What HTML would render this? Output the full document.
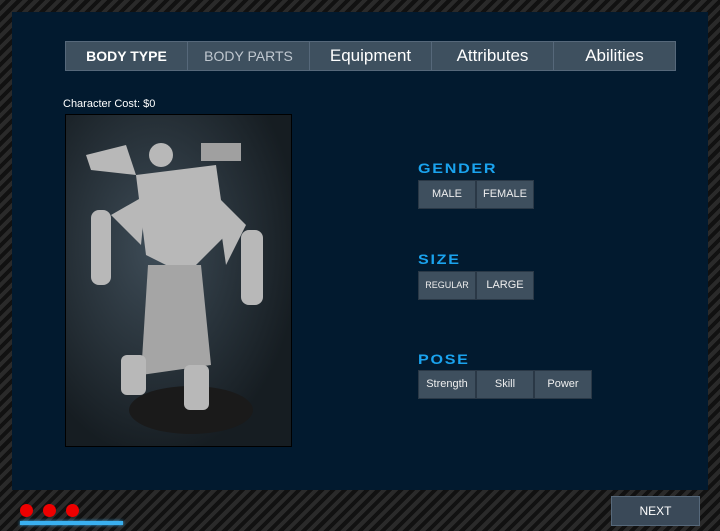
<!DOCTYPE html>
<html><head><style>
body{margin:0;width:720px;height:531px;overflow:hidden;font-family:"Liberation Sans",sans-serif;
background:repeating-linear-gradient(135deg,#2a2a2a 0 4px,#111 4px 8px);}
.main{position:absolute;left:12px;top:12px;width:696px;height:478px;background:#021a2f;}
.tabs{position:absolute;left:65px;top:41px;width:611px;height:30px;display:flex;background:#3e505f;border:1px solid #56687a;box-sizing:border-box}
.tabs div{flex:1;color:#fff;text-align:center;line-height:28px;font-size:17px;border-left:1px solid #56687a}
.tabs div:first-child{border:none;font-weight:bold;font-size:14px}
.tabs div.g{color:#c0c8d0;font-size:14px}
.lbl{position:absolute;color:#1aa3ee;font-weight:bold;font-size:14px;letter-spacing:1.5px;transform:scaleX(1.15);transform-origin:left}
.btns{position:absolute;display:flex;height:29px}
.btns div{width:58px;background:#3e4f5e;border:1px solid #2a3846;color:#eee;font-size:11px;text-align:center;line-height:27px;box-sizing:border-box}
</style></head><body>
<div class="main"></div>
<div class="tabs"><div>BODY TYPE</div><div class="g">BODY PARTS</div><div>Equipment</div><div>Attributes</div><div>Abilities</div></div>
<div style="position:absolute;left:63px;top:98px;color:#fff;font-size:11px">Character Cost: $0</div>
<div style="position:absolute;left:65px;top:114px;width:227px;height:333px;background:radial-gradient(ellipse at 40% 40%,#3e4c57,#161d22 75%);border:1px solid #000;box-sizing:border-box">
<svg width="227" height="333" viewBox="0 0 227 333">
<ellipse cx="125" cy="295" rx="62" ry="24" fill="#1a1a1a"/>
<g fill="#b8b8b8">
<circle cx="95" cy="40" r="12"/>
<path d="M20 40 L60 30 L70 60 L25 55 Z"/>
<rect x="135" y="28" width="40" height="18" fill="#a0a0a0"/>
<path d="M70 60 L150 50 L160 120 L120 160 L80 140 Z"/>
<rect x="25" y="95" width="20" height="75" rx="8"/>
<rect x="175" y="115" width="22" height="75" rx="8"/>
<path d="M45 100 L80 80 L75 130 Z"/><path d="M150 80 L180 110 L160 150 Z"/>
<path d="M82 150 L135 150 L145 250 L75 260 Z" fill="#a5a5a5"/>
<rect x="55" y="240" width="25" height="40" rx="6"/>
<rect x="118" y="250" width="25" height="45" rx="6"/>
</g></svg></div>
<div class="lbl" style="left:418px;top:160px">GENDER</div>
<div class="btns" style="left:418px;top:180px"><div>MALE</div><div>FEMALE</div></div>
<div class="lbl" style="left:418px;top:251px">SIZE</div>
<div class="btns" style="left:418px;top:271px"><div style="font-size:9px">REGULAR</div><div>LARGE</div></div>
<div class="lbl" style="left:418px;top:351px">POSE</div>
<div class="btns" style="left:418px;top:370px"><div>Strength</div><div>Skill</div><div>Power</div></div>
<div style="position:absolute;left:611px;top:496px;width:89px;height:30px;background:#3a4958;border:1px solid #56687a;box-sizing:border-box;color:#fff;font-size:12px;text-align:center;line-height:28px">NEXT</div>
<div style="position:absolute;left:20px;top:504px;width:13px;height:13px;border-radius:50%;background:#e00"></div>
<div style="position:absolute;left:43px;top:504px;width:13px;height:13px;border-radius:50%;background:#e00"></div>
<div style="position:absolute;left:66px;top:504px;width:13px;height:13px;border-radius:50%;background:#e00"></div>
<div style="position:absolute;left:20px;top:521px;width:103px;height:4px;background:#3ab0f0;box-shadow:0 0 3px #3ab0f0"></div>
</body></html>
